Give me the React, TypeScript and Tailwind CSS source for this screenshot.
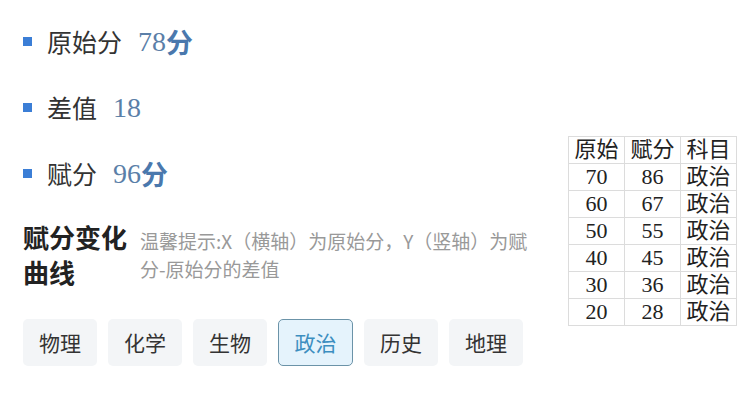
const serif = { fontFamily: '"Liberation Serif", "Noto Sans CJK SC", serif' };

const stats = [
  { label: "原始分", value: "78", unit: "分" },
  { label: "差值", value: "18", unit: "" },
  { label: "赋分", value: "96", unit: "分" },
];

const rows = [
  ["70", "86"],
  ["60", "67"],
  ["50", "55"],
  ["40", "45"],
  ["30", "36"],
  ["20", "28"],
];

const subjects = ["物理", "化学", "生物", "政治", "历史", "地理"];

export default function App() {
  return (
    <div className="w-[756px] h-[409px] bg-white flex font-['Noto_Sans_CJK_SC',sans-serif] overflow-hidden">
      <div className="w-[568px] pl-[23px] pt-[26px]">
        <div className="flex flex-col gap-[35px]">
          {stats.map((s) => (
            <div key={s.label} className="flex items-center h-[31px]">
              <span className="w-[9px] h-[9px] bg-[#3b7ed6] mr-[15px]" />
              <span className="text-[25px] text-[#333] leading-none">{s.label}</span>
              <span className="ml-[16px] text-[28px] text-[#5b7fa8] leading-none" style={serif}>
                {s.value}
              </span>
              {s.unit && (
                <span className="text-[27px] font-bold text-[#4a78ad] leading-none">{s.unit}</span>
              )}
            </div>
          ))}
        </div>
        <div className="flex mt-[30px]">
          <div className="w-[112px] text-[26px] font-bold text-[#222] leading-[35px]">赋分变化曲线</div>
          <div className="ml-[5px] mt-[8px] w-[402px] text-[19px] text-[#999] leading-[28px]">
            温馨提示:X（横轴）为原始分，Y（竖轴）为赋分-原始分的差值
          </div>
        </div>
        <div className="flex gap-[11px] mt-[30px]">
          {subjects.map((name) => (
            <div
              key={name}
              className={
                name === "政治"
                  ? "w-[75px] h-[47px] flex items-center justify-center rounded-[5px] border border-[#6b93a8] bg-[#e5f3fc] text-[21px] text-[#3c8ec0]"
                  : "w-[74px] h-[47px] flex items-center justify-center rounded-[5px] bg-[#f3f5f7] text-[21px] text-[#333]"
              }
            >
              {name}
            </div>
          ))}
        </div>
      </div>
      <div className="pt-[136px]">
        <table className="border-collapse text-[22px] text-[#222]" style={serif}>
          <thead>
            <tr className="h-[27px]">
              <th className="w-[56px] border border-[#dcdcdc] font-normal leading-none">原始</th>
              <th className="w-[56px] border border-[#dcdcdc] font-normal leading-none">赋分</th>
              <th className="w-[56px] border border-[#dcdcdc] font-normal leading-none">科目</th>
            </tr>
          </thead>
          <tbody>
            {rows.map(([a, b]) => (
              <tr key={a} className="h-[27px]">
                <td className="border border-[#dcdcdc] text-center leading-none">{a}</td>
                <td className="border border-[#dcdcdc] text-center leading-none">{b}</td>
                <td className="border border-[#dcdcdc] text-center leading-none">政治</td>
              </tr>
            ))}
          </tbody>
        </table>
      </div>
    </div>
  );
}
